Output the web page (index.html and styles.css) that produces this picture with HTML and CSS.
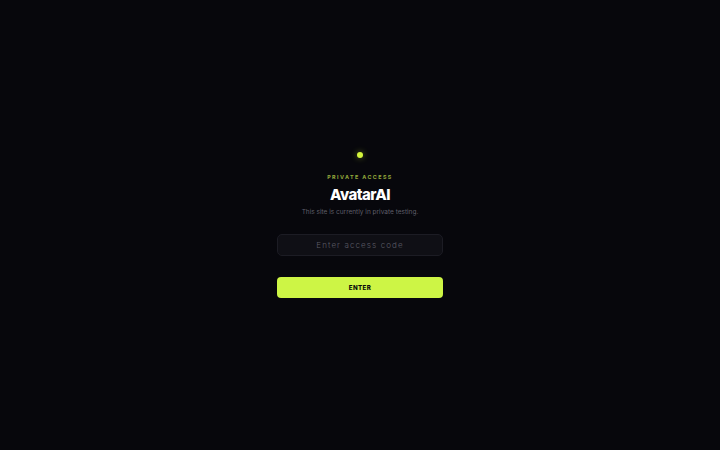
FILE: index.html
```html
<!DOCTYPE html>
<html lang="en">
<head>
<meta charset="utf-8">
<title>AvatarAI — Private Access</title>
<link rel="stylesheet" href="styles.css">
</head>
<body>
<main class="gate">
  <span class="dot"></span>
  <p class="eyebrow">PRIVATE ACCESS</p>
  <h1 class="title">AvatarAI</h1>
  <p class="subtitle">This site is currently in private testing.</p>
  <form class="form">
    <input class="code" type="password" placeholder="Enter access code">
    <button class="enter" type="button">ENTER</button>
  </form>
</main>
</body>
</html>
```
FILE: styles.css
```css
* { box-sizing: border-box; }
html, body { margin: 0; height: 100%; }
body {
  background: #07070c;
  font-family: Inter, "Liberation Sans", sans-serif;
  display: flex;
  align-items: center;
  justify-content: center;
}
.gate {
  width: 166px;
  display: flex;
  flex-direction: column;
  align-items: center;
}
.dot {
  width: 6px;
  height: 6px;
  border-radius: 50%;
  background: #d4f53c;
  box-shadow: 0 0 6px rgba(212,245,60,0.45);
}
.eyebrow {
  margin: 15px 0 0;
  font-size: 5.4px;
  font-weight: 700;
  letter-spacing: 1.4px;
  color: #93a83b;
  line-height: 8px;
}
.title {
  margin: 5px 0 0;
  font-size: 15px;
  font-weight: 800;
  letter-spacing: -0.6px;
  color: #ffffff;
  line-height: 18px;
}
.subtitle {
  margin: 3px 0 0;
  font-size: 6.5px;
  color: #5f5f6a;
  line-height: 10px;
}
.form {
  width: 100%;
  margin-top: 17px;
  display: flex;
  flex-direction: column;
  gap: 21px;
}
.code {
  width: 100%;
  height: 22px;
  background: #0f0f15;
  border: 1px solid #1c1c24;
  border-radius: 5px;
  text-align: center;
  font-family: inherit;
  font-size: 8px;
  font-weight: 300;
  letter-spacing: 1.1px;
  color: #ddd;
  outline: none;
}
.code::placeholder { color: #5c5c66; }
.enter {
  width: 100%;
  height: 21px;
  background: #cdf545;
  border: none;
  border-radius: 4px;
  font-family: inherit;
  font-size: 6.2px;
  font-weight: 800;
  letter-spacing: 0.4px;
  color: #0b0b0b;
}
```
